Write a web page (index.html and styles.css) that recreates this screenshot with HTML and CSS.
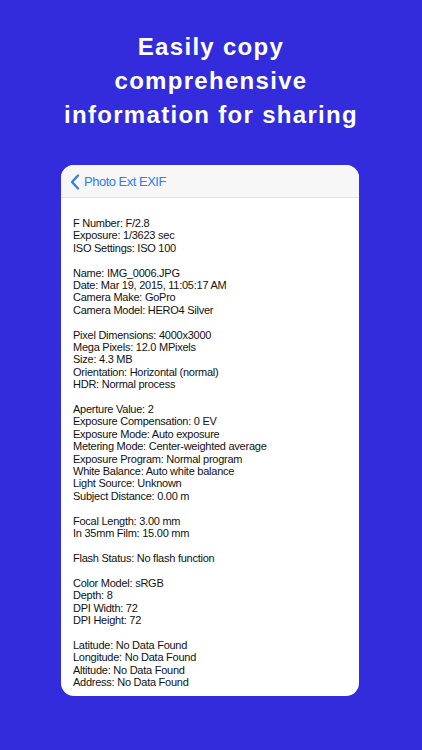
FILE: index.html
```html
<!DOCTYPE html>
<html>
<head>
<meta charset="utf-8">
<link rel="stylesheet" href="styles.css">
</head>
<body>
<div class="page">
  <h1 class="title">Easily copy<br>comprehensive<br>information for sharing</h1>
  <div class="card">
    <div class="navbar">
      <svg class="chev" width="10" height="16" viewBox="0 0 10 16"><path d="M8 1.5 L2 8 L8 14.5" fill="none" stroke="#2f7cf6" stroke-width="2.3" stroke-linecap="round" stroke-linejoin="round"/></svg>
      <span class="back">Photo Ext EXIF</span>
    </div>
    <div class="content">
      <p class="group">F Number: F/2.8<br>Exposure: 1/3623 sec<br>ISO Settings: ISO 100</p>
      <p class="group">Name: IMG_0006.JPG<br>Date: Mar 19, 2015, 11:05:17 AM<br>Camera Make: GoPro<br>Camera Model: HERO4 Silver</p>
      <p class="group">Pixel Dimensions: 4000x3000<br>Mega Pixels: 12.0 MPixels<br>Size: 4.3 MB<br>Orientation: Horizontal (normal)<br>HDR: Normal process</p>
      <p class="group">Aperture Value: 2<br>Exposure Compensation: 0 EV<br>Exposure Mode: Auto exposure<br>Metering Mode: Center-weighted average<br>Exposure Program: Normal program<br>White Balance: Auto white balance<br>Light Source: Unknown<br>Subject Distance: 0.00 m</p>
      <p class="group">Focal Length: 3.00 mm<br>In 35mm Film: 15.00 mm</p>
      <p class="group">Flash Status: No flash function</p>
      <p class="group">Color Model: sRGB<br>Depth: 8<br>DPI Width: 72<br>DPI Height: 72</p>
      <p class="group">Latitude: No Data Found<br>Longitude: No Data Found<br>Altitude: No Data Found<br>Address: No Data Found</p>
    </div>
  </div>
</div>
</body>
</html>
```

FILE: styles.css
```css
html, body {
  margin: 0;
  padding: 0;
}
body {
  background: #322cdc;
  width: 422px;
  height: 750px;
  overflow: hidden;
}
.page {
  display: flex;
  flex-direction: column;
  align-items: center;
}
.title {
  margin: 30px 0 0 0;
  font-family: "Liberation Sans", Arial, sans-serif;
  font-weight: bold;
  font-size: 24px;
  line-height: 34px;
  letter-spacing: 1.3px;
  color: #ffffff;
  text-align: center;
}
.card {
  margin-top: 33px;
  margin-left: -2px;
  width: 298px;
  height: 531px;
  background: #ffffff;
  border-radius: 13px;
  overflow: hidden;
}
.navbar {
  height: 32px;
  background: #f7f7f7;
  border-bottom: 1px solid #e2e2e2;
  display: flex;
  align-items: center;
  padding-left: 9px;
  gap: 4px;
}
.chev {
  display: block;
  margin-top: 1px;
}
.back {
  font-family: "Liberation Sans", Arial, sans-serif;
  font-size: 13px;
  letter-spacing: -0.5px;
  color: #2f7cf6;
  margin-top: 1px;
}
.content {
  padding: 19px 0 0 12px;
  font-family: "Liberation Sans", Arial, sans-serif;
  font-size: 11px;
  line-height: 12.4px;
  letter-spacing: -0.25px;
  color: #111111;
}
.group {
  margin: 0 0 12.4px 0;
}
```
